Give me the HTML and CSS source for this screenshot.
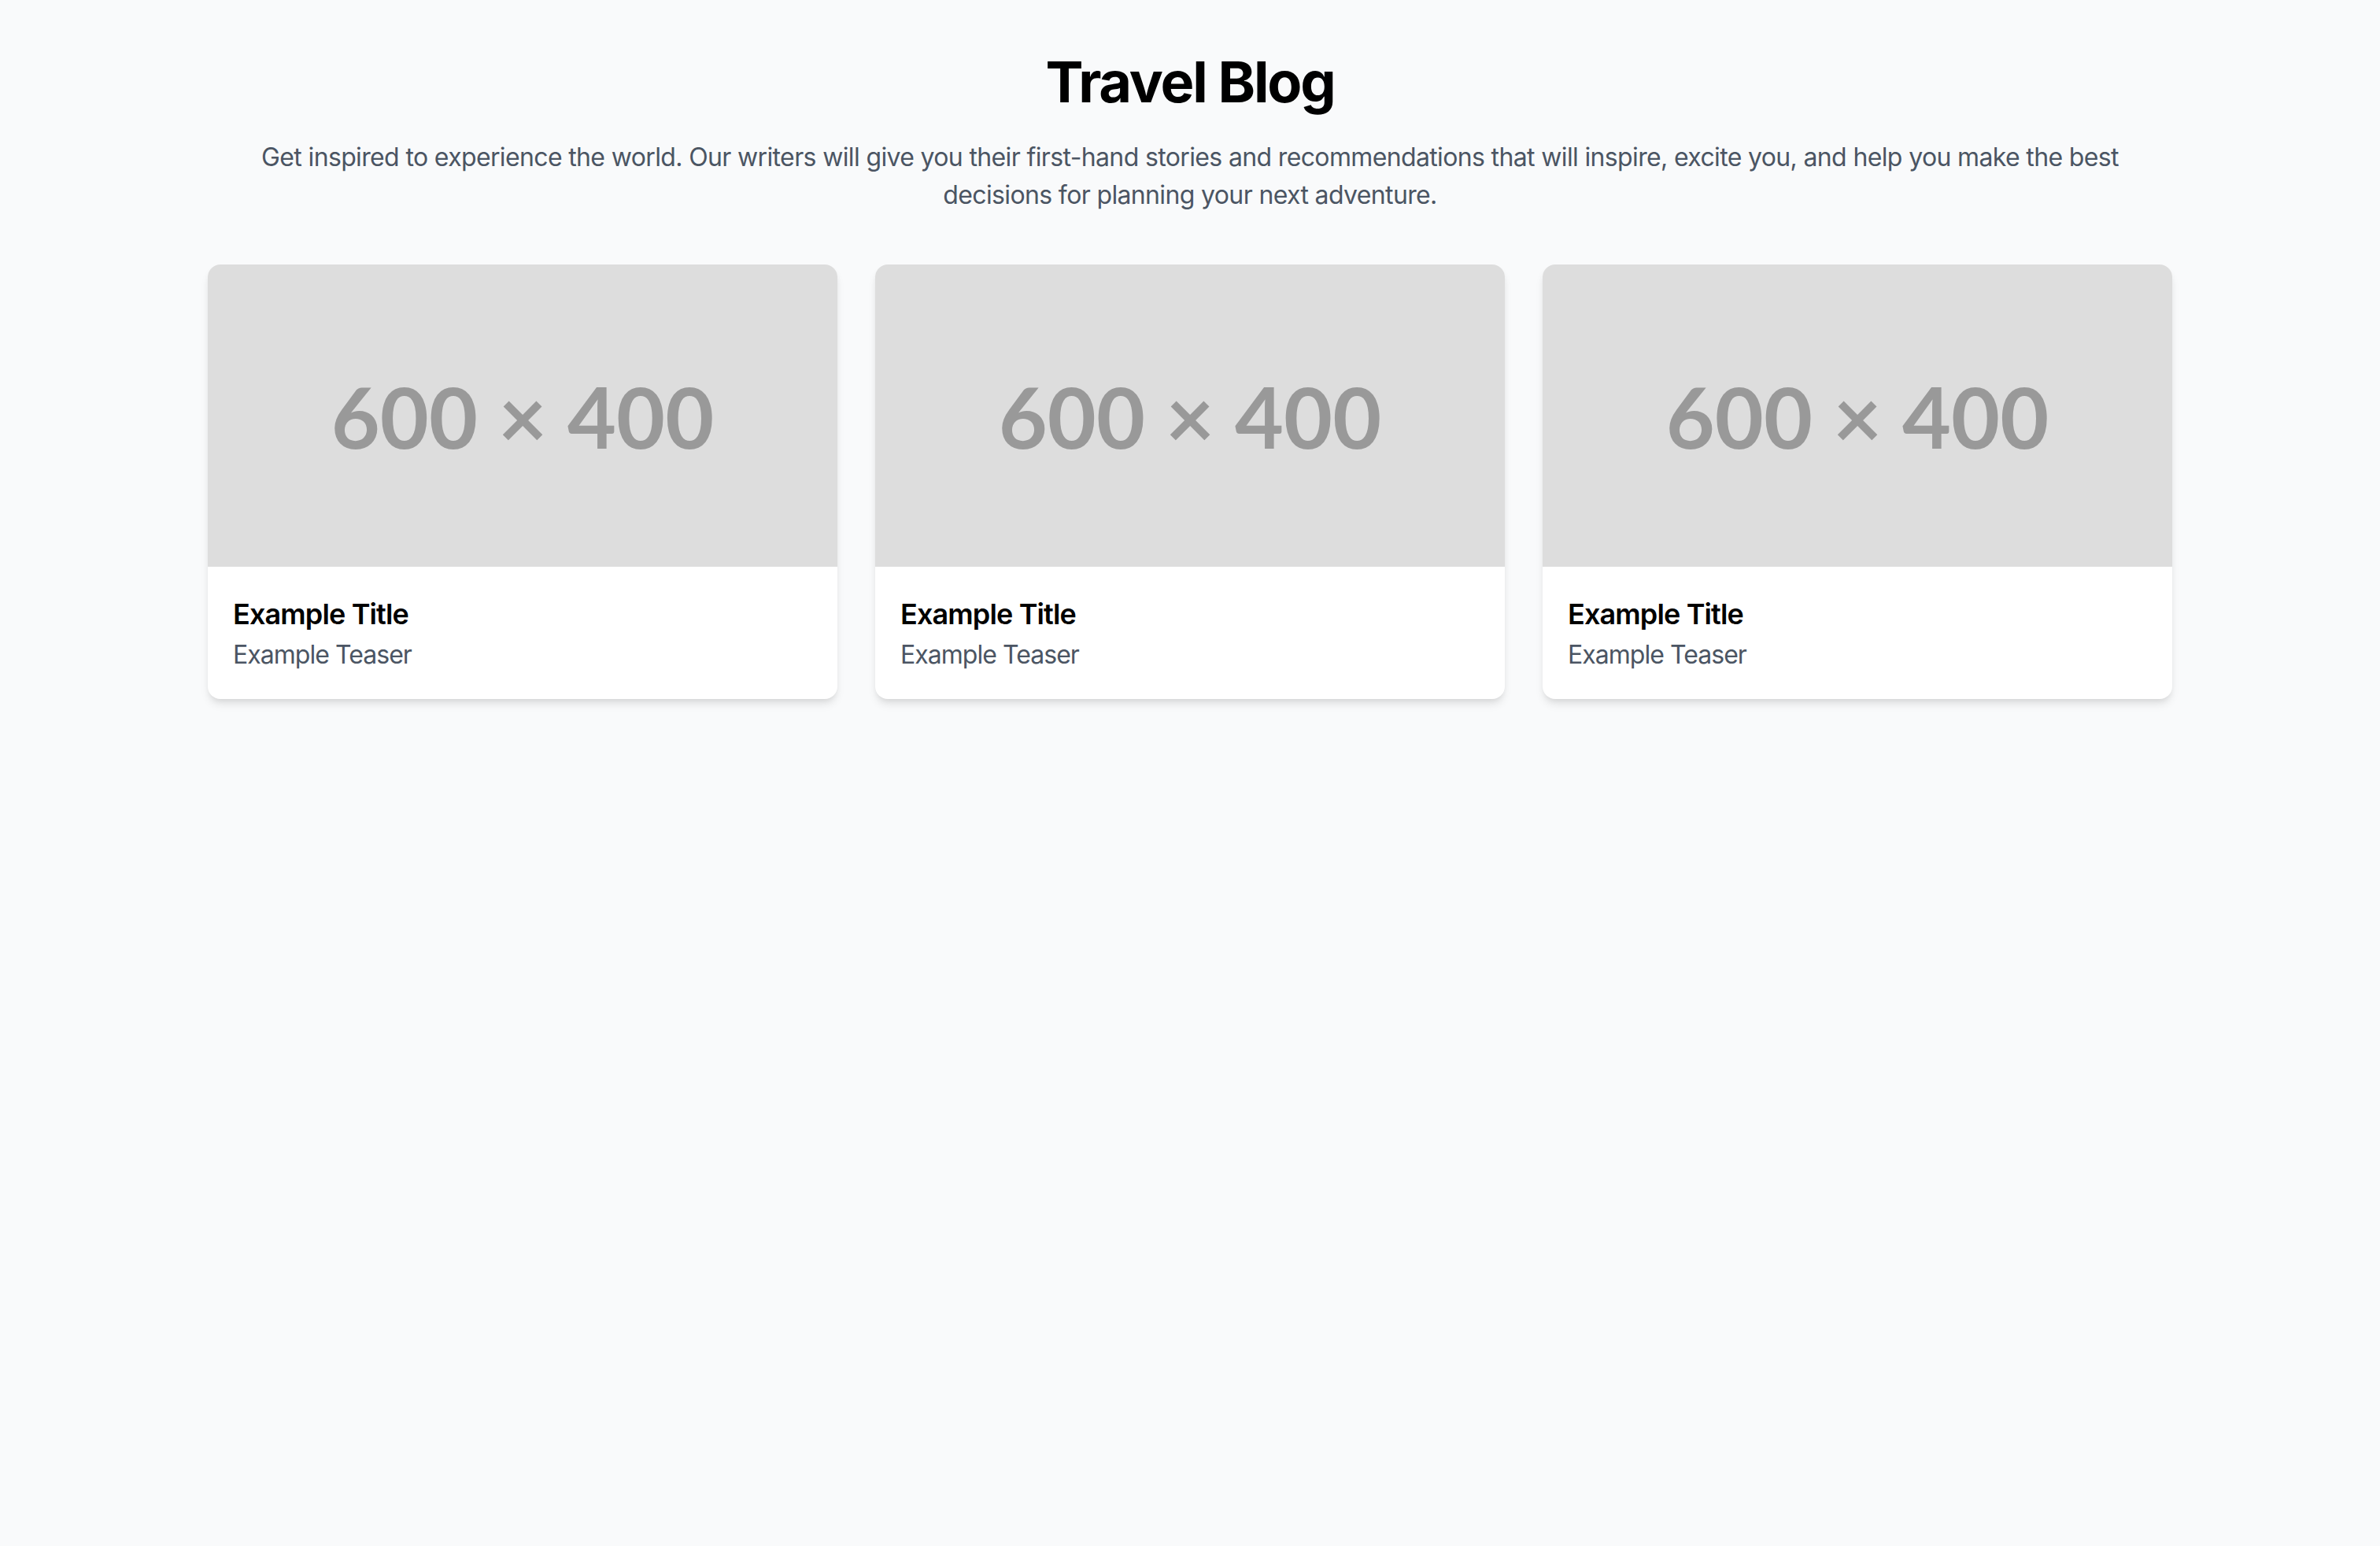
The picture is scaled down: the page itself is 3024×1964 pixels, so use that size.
FILE: index.html
```html
<!DOCTYPE html>
<html lang="en">

<head>
    <meta charset="UTF-8">
    <meta name="viewport" content="width=device-width, initial-scale=1.0">
    <title>Travel Blog</title>
    <link rel="stylesheet" href="styles.css">
</head>

<body>
    <div class="main">
        <header class="intro">
            <h1>Travel Blog</h1>
            <p>Get inspired to experience the world. Our writers will give you their first-hand stories and recommendations that will inspire, excite you, and help you make the best decisions for planning your next adventure.</p>
        </header>
        <div class="posts">
            <article class="card">
                <div class="thumb"><span>600 × 400</span></div>
                <div class="body">
                    <h3>Example Title</h3>
                    <p>Example Teaser</p>
                </div>
            </article>
            <article class="card">
                <div class="thumb"><span>600 × 400</span></div>
                <div class="body">
                    <h3>Example Title</h3>
                    <p>Example Teaser</p>
                </div>
            </article>
            <article class="card">
                <div class="thumb"><span>600 × 400</span></div>
                <div class="body">
                    <h3>Example Title</h3>
                    <p>Example Teaser</p>
                </div>
            </article>
        </div>
    </div>
</body>

</html>
```

FILE: styles.css
```css
body {
    margin: 0;
    min-height: 100vh;
    background-color: #f9fafb;
    font-family: Inter, "Noto Sans", sans-serif;
    color: #000;
}

.main {
    max-width: 2560px;
    margin: 0 auto;
    padding: 64px 32px;
    box-sizing: border-box;
}

.intro {
    text-align: center;
    margin-bottom: 64px;
}

.intro h1 {
    margin: 0 0 32px;
    font-size: 72px;
    line-height: 80px;
    font-weight: 700;
    letter-spacing: -0.03em;
}

.intro p {
    max-width: 2400px;
    margin: 0 auto;
    font-size: 32px;
    line-height: 48px;
    color: #4b5563;
    letter-spacing: -0.02em;
}

.posts {
    display: grid;
    grid-template-columns: repeat(3, 1fr);
    gap: 48px;
}

.card {
    overflow: hidden;
    border-radius: 16px;
    background-color: #fff;
    box-shadow: 0 8px 12px -2px rgba(0, 0, 0, .1), 0 4px 8px -4px rgba(0, 0, 0, .1);
}

.thumb {
    height: 384px;
    display: flex;
    justify-content: center;
    align-items: center;
    background-color: #dddddd;
    color: #999999;
    font-family: Lato, sans-serif;
    font-size: 107px;
    font-weight: 700;
}

.body {
    padding: 32px;
}

.body h3 {
    margin: 0;
    font-size: 36px;
    line-height: 56px;
    font-weight: 600;
    letter-spacing: -0.024em;
}

.body p {
    margin: 0;
    font-size: 32px;
    line-height: 48px;
    color: #4b5563;
    letter-spacing: -0.03em;
}
```
